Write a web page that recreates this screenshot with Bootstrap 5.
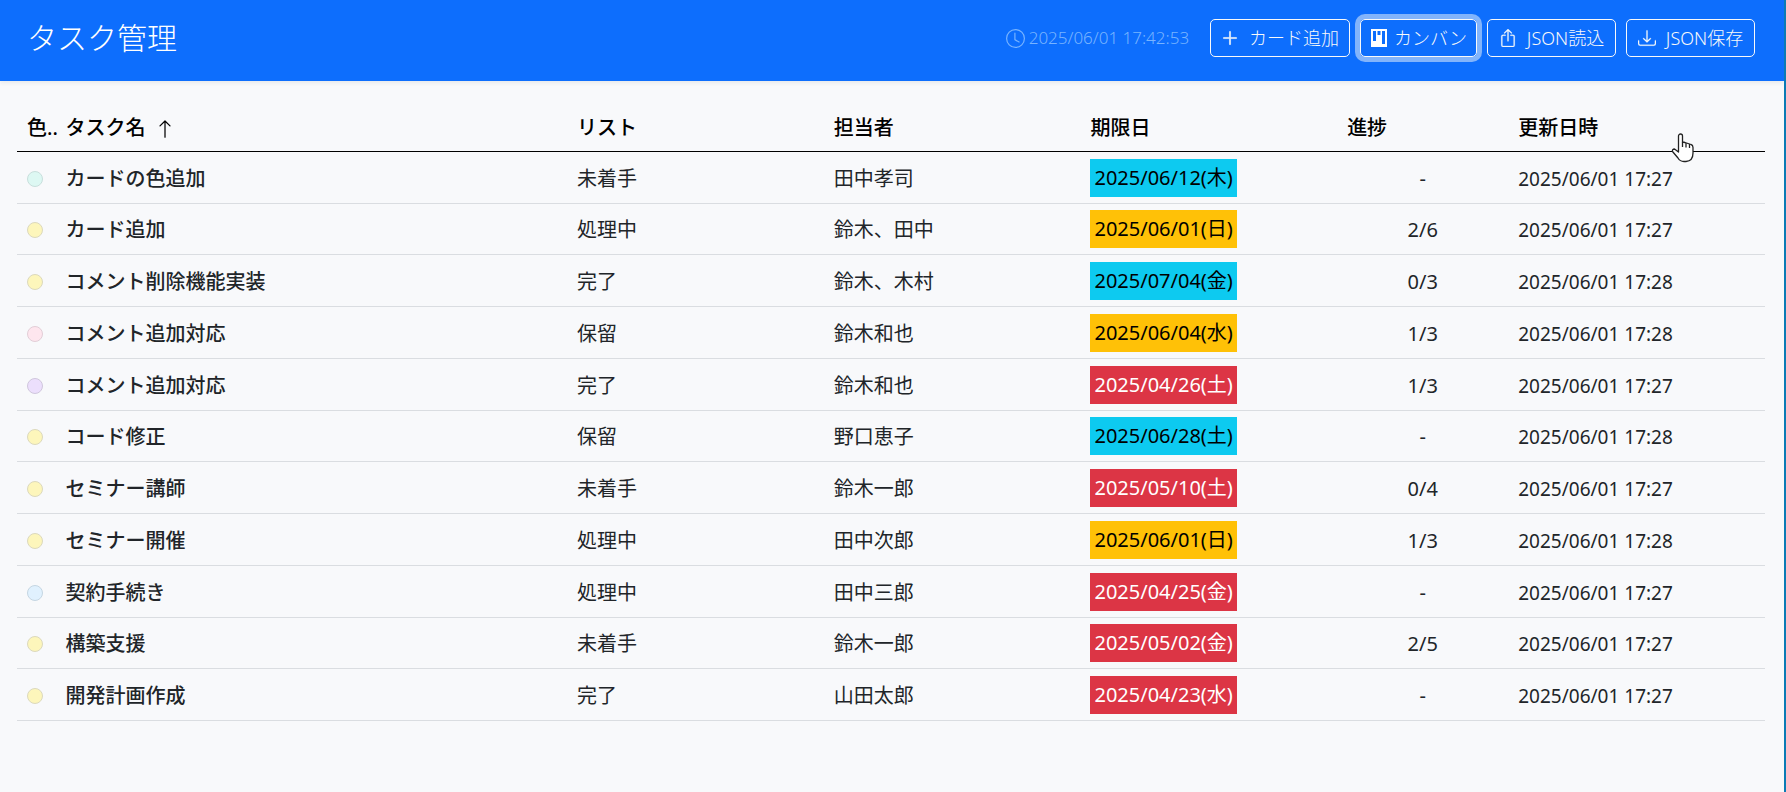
<!DOCTYPE html>
<html lang="ja">
<head>
<meta charset="utf-8">
<meta name="viewport" content="width=device-width, initial-scale=1">
<title>タスク管理</title>
<link href="https://cdn.jsdelivr.net/npm/bootstrap@5.3.0/dist/css/bootstrap.min.css" rel="stylesheet">
<style>
body {
  font-family: "Noto Sans", "Noto Sans CJK JP", sans-serif;
  font-size: 20px;
  background: #f8f9fb;
  border-right: 2px solid #0b7bb5;
}
.app-bar { height: 81px; padding: 0 29px 5px 27px; }
.app-title { font-size: 30px; font-weight: 300; line-height: 40px; }
.clock { font-size: 17px; font-weight: 300; color: #78b4ff; gap: 4px; margin-right: 11px; }
.app-actions { gap: 10px; }
.app-actions .btn {
  font-size: 18px; line-height: 24px; font-weight: 300;
  height: 38px; padding: 0 10px; border-radius: 5px;
  display: inline-flex; align-items: center; justify-content: center; gap: 10px;
}
.app-actions .btn-json { min-width: 129px; }
.app-actions .btn.is-current { gap: 6px; padding: 0 9px; box-shadow: 0 0 0 5px rgba(248, 249, 250, .5); }
.task-area { padding: 21px 19px 0 17px; }
.task-table {
  --bs-table-bg: transparent;
  --bs-table-color: #212529;
  table-layout: fixed;
  border-collapse: separate;
  border-spacing: 0;
}
.task-table th, .task-table td {
  height: 52px; padding: 2px 10px 0; line-height: 28px;
  vertical-align: middle; white-space: nowrap;
  border-bottom: 1px solid #dadde1;
}
.task-table tbody tr:nth-child(4n+2) > * { height: 51px; }
.task-table thead th { height: 50px; border-bottom-color: #000; color: #000; position: relative; }
.task-table .narrow { padding-right: 0; }
.task-table th { font-weight: 500; }
.task-table .due-cell { padding-top: 0; }
.stamp { font-size: 19px; }
.col-tag { width: 2.2%; }
.col-name { width: 29.3%; }
.col-std { width: 14.7%; }
.col-prog { width: 9.8%; }
.dot { display: block; width: 16px; height: 16px; border-radius: 50%; border: 1px solid #d5d5d5; }
.dot-mint { background: #ddf8f3; border-color: #c8dfdc; }
.dot-yellow { background: #fdf6bb; border-color: #dcd9bd; }
.dot-pink { background: #fee6ee; border-color: #e2ced7; }
.dot-purple { background: #ecdffc; border-color: #d0c7dd; }
.dot-blue { background: #e0f1fe; border-color: #c5d6e2; }
.due { display: block; width: fit-content; line-height: 38px; padding: 0 4px; }
.pointer { position: absolute; left: 163px; top: 30px; z-index: 2; }
</style>
</head>
<body class="min-vh-100">
<header class="app-bar d-flex align-items-center justify-content-between bg-primary text-white shadow-sm">
  <h1 class="app-title mb-0">タスク管理</h1>
  <div class="app-actions d-flex align-items-center">
    <div class="clock d-flex align-items-center">
      <svg width="19" height="19" viewBox="0 0 16 16" fill="currentColor" aria-hidden="true"><path d="M8 3.5a.5.5 0 0 0-1 0V9a.5.5 0 0 0 .252.434l3.5 2a.5.5 0 0 0 .496-.868L8 8.71z"/><path d="M8 16A8 8 0 1 0 8 0a8 8 0 0 0 0 16m7-8A7 7 0 1 1 1 8a7 7 0 0 1 14 0"/></svg>
      <time datetime="2025-06-01T17:42:53">2025/06/01 17:42:53</time>
    </div>
    <button type="button" class="btn btn-outline-light">
      <svg width="18" height="18" viewBox="0 0 16 16" fill="currentColor" aria-hidden="true"><path d="M8 2a.5.5 0 0 1 .5.5v5h5a.5.5 0 0 1 0 1h-5v5a.5.5 0 0 1-1 0v-5h-5a.5.5 0 0 1 0-1h5v-5A.5.5 0 0 1 8 2" stroke="currentColor" stroke-width=".5"/></svg>
      カード追加
    </button>
    <button type="button" class="btn btn-outline-light is-current">
      <svg width="18" height="18" viewBox="0 0 18 18" aria-hidden="true"><path fill="#fff" fill-rule="evenodd" d="M1 0h16v18H1zM3 2v10h3V2zM7.500 2v4h3V2zM12 2v13h3V2z"/></svg>
      カンバン
    </button>
    <button type="button" class="btn btn-outline-light btn-json">
      <svg width="18" height="18" viewBox="0 0 16 16" fill="currentColor" stroke="currentColor" stroke-width=".2" aria-hidden="true"><path d="M3.500 6a.5.5 0 0 0-.5.5v8a.5.5 0 0 0 .5.5h9a.5.5 0 0 0 .5-.5v-8a.5.5 0 0 0-.5-.5h-2a.5.5 0 0 1 0-1h2A1.500 1.500 0 0 1 14 6.500v8a1.500 1.500 0 0 1-1.500 1.500h-9A1.500 1.500 0 0 1 2 14.500v-8A1.500 1.500 0 0 1 3.500 5h2a.5.5 0 0 1 0 1z"/><path d="M7.646.146a.5.5 0 0 1 .708 0l3 3a.5.5 0 0 1-.708.708L8.500 1.707V10.500a.5.5 0 0 1-1 0V1.707L5.354 3.854a.5.5 0 1 1-.708-.708z"/></svg>
      JSON読込
    </button>
    <button type="button" class="btn btn-outline-light btn-json">
      <svg width="18" height="18" viewBox="0 0 16 16" fill="currentColor" stroke="currentColor" stroke-width=".2" aria-hidden="true"><path d="M.5 9.900a.5.5 0 0 1 .5.5v2.500a1 1 0 0 0 1 1h12a1 1 0 0 0 1-1v-2.500a.5.5 0 0 1 1 0v2.500a2 2 0 0 1-2 2H2a2 2 0 0 1-2-2v-2.500a.5.5 0 0 1 .5-.5"/><path d="M7.646 11.854a.5.5 0 0 0 .708 0l3-3a.5.5 0 0 0-.708-.708L8.500 10.293V1.500a.5.5 0 0 0-1 0v8.793L5.354 8.146a.5.5 0 1 0-.708.708z"/></svg>
      JSON保存
    </button>
  </div>
</header>
<main class="task-area">
  <table class="task-table table mb-0">
    <thead>
      <tr>
        <th scope="col" class="col-tag narrow">色..</th>
        <th scope="col" class="col-name">タスク名 <svg class="ms-1" width="20" height="20" viewBox="0 0 16 16" fill="currentColor" aria-hidden="true"><path d="M8 15a.5.5 0 0 0 .5-.5V2.707l3.146 3.147a.5.5 0 0 0 .708-.708l-4-4a.5.5 0 0 0-.708 0l-4 4a.5.5 0 1 0 .708.708L7.500 2.707V14.500a.5.5 0 0 0 .5.5"/></svg></th>
        <th scope="col" class="col-std">リスト</th>
        <th scope="col" class="col-std">担当者</th>
        <th scope="col" class="col-std">期限日</th>
        <th scope="col" class="col-prog">進捗</th>
        <th scope="col" class="col-std">更新日時
          <svg class="pointer" width="24" height="32" viewBox="0 0 24 32" aria-hidden="true"><path d="M7.500 18V4a2 2 0 0 1 4 0V10l2.500.5 6 2q2 .5 2 3V21q0 8-7 8.500h-2q-4 0-6-3.500L1.500 19.500q-.5-2.500 2-2.500L7.500 20z" fill="#fff" stroke="#222" stroke-width="1.300" stroke-linejoin="round"/><path d="M11.500 10v5M15 11v4.500M18.500 12V16" stroke="#222" stroke-width="1.300" fill="none"/></svg>
        </th>
      </tr>
    </thead>
    <tbody>
      <tr><td><span class="dot dot-mint"></span></td><th scope="row">カードの色追加</th><td>未着手</td><td>田中孝司</td><td class="due-cell"><span class="due bg-info text-black">2025/06/12(木)</span></td><td class="text-center">-</td><td class="stamp">2025/06/01 17:27</td></tr>
      <tr><td><span class="dot dot-yellow"></span></td><th scope="row">カード追加</th><td>処理中</td><td>鈴木、田中</td><td class="due-cell"><span class="due bg-warning text-black">2025/06/01(日)</span></td><td class="text-center">2/6</td><td class="stamp">2025/06/01 17:27</td></tr>
      <tr><td><span class="dot dot-yellow"></span></td><th scope="row">コメント削除機能実装</th><td>完了</td><td>鈴木、木村</td><td class="due-cell"><span class="due bg-info text-black">2025/07/04(金)</span></td><td class="text-center">0/3</td><td class="stamp">2025/06/01 17:28</td></tr>
      <tr><td><span class="dot dot-pink"></span></td><th scope="row">コメント追加対応</th><td>保留</td><td>鈴木和也</td><td class="due-cell"><span class="due bg-warning text-black">2025/06/04(水)</span></td><td class="text-center">1/3</td><td class="stamp">2025/06/01 17:28</td></tr>
      <tr><td><span class="dot dot-purple"></span></td><th scope="row">コメント追加対応</th><td>完了</td><td>鈴木和也</td><td class="due-cell"><span class="due bg-danger text-white">2025/04/26(土)</span></td><td class="text-center">1/3</td><td class="stamp">2025/06/01 17:27</td></tr>
      <tr><td><span class="dot dot-yellow"></span></td><th scope="row">コード修正</th><td>保留</td><td>野口恵子</td><td class="due-cell"><span class="due bg-info text-black">2025/06/28(土)</span></td><td class="text-center">-</td><td class="stamp">2025/06/01 17:28</td></tr>
      <tr><td><span class="dot dot-yellow"></span></td><th scope="row">セミナー講師</th><td>未着手</td><td>鈴木一郎</td><td class="due-cell"><span class="due bg-danger text-white">2025/05/10(土)</span></td><td class="text-center">0/4</td><td class="stamp">2025/06/01 17:27</td></tr>
      <tr><td><span class="dot dot-yellow"></span></td><th scope="row">セミナー開催</th><td>処理中</td><td>田中次郎</td><td class="due-cell"><span class="due bg-warning text-black">2025/06/01(日)</span></td><td class="text-center">1/3</td><td class="stamp">2025/06/01 17:28</td></tr>
      <tr><td><span class="dot dot-blue"></span></td><th scope="row">契約手続き</th><td>処理中</td><td>田中三郎</td><td class="due-cell"><span class="due bg-danger text-white">2025/04/25(金)</span></td><td class="text-center">-</td><td class="stamp">2025/06/01 17:27</td></tr>
      <tr><td><span class="dot dot-yellow"></span></td><th scope="row">構築支援</th><td>未着手</td><td>鈴木一郎</td><td class="due-cell"><span class="due bg-danger text-white">2025/05/02(金)</span></td><td class="text-center">2/5</td><td class="stamp">2025/06/01 17:27</td></tr>
      <tr><td><span class="dot dot-yellow"></span></td><th scope="row">開発計画作成</th><td>完了</td><td>山田太郎</td><td class="due-cell"><span class="due bg-danger text-white">2025/04/23(水)</span></td><td class="text-center">-</td><td class="stamp">2025/06/01 17:27</td></tr>
    </tbody>
  </table>
</main>
<script src="https://cdn.jsdelivr.net/npm/bootstrap@5.3.0/dist/js/bootstrap.bundle.min.js"></script>
</body>
</html>
